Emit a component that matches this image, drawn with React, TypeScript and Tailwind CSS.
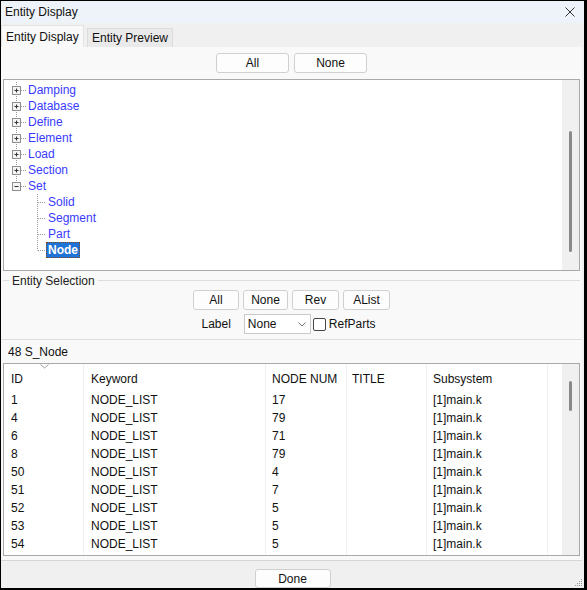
import React from "react";

const font = { fontFamily: '"Liberation Sans", Arial, sans-serif' };

type TreeItem = { label: string; level: 0 | 1; expander?: "plus" | "minus"; last?: boolean; selected?: boolean };

const TREE: TreeItem[] = [
  { label: "Damping", level: 0, expander: "plus" },
  { label: "Database", level: 0, expander: "plus" },
  { label: "Define", level: 0, expander: "plus" },
  { label: "Element", level: 0, expander: "plus" },
  { label: "Load", level: 0, expander: "plus" },
  { label: "Section", level: 0, expander: "plus" },
  { label: "Set", level: 0, expander: "minus", last: true },
  { label: "Solid", level: 1 },
  { label: "Segment", level: 1 },
  { label: "Part", level: 1 },
  { label: "Node", level: 1, last: true, selected: true },
];

const ROWS = [
  ["1", "17"],
  ["4", "79"],
  ["6", "71"],
  ["8", "79"],
  ["50", "4"],
  ["51", "7"],
  ["52", "5"],
  ["53", "5"],
  ["54", "5"],
];

const COLS = [
  { name: "ID", w: "w-[80px]", pl: "pl-[7px]" },
  { name: "Keyword", w: "w-[182px]", pl: "pl-[7px]" },
  { name: "NODE NUM", w: "w-[81px]", pl: "pl-[6px]" },
  { name: "TITLE", w: "w-[80px]", pl: "pl-[5px]" },
  { name: "Subsystem", w: "w-[121px]", pl: "pl-[6px]" },
];

function Btn({ label, w }: { label: string; w: string }) {
  return (
    <div
      className={`${w} h-[20px] flex items-center justify-center rounded-[3px] border border-[#d0d0d0] bg-[#fdfdfd] text-[12px] text-[#111]`}
    >
      {label}
    </div>
  );
}

// dotted tree guide lines + expander box for one row
function Gutter({ item, index }: { item: TreeItem; index: number }) {
  const dot = "#9a9a9a";
  return (
    <svg width="44" height="16" className="shrink-0">
      {item.level === 0 ? (
        <line
          x1="12.5"
          y1={index === 0 ? -2 : 0}
          x2="12.5"
          y2={item.last ? 8 : 16}
          stroke={dot}
          strokeDasharray="1 1"
        />
      ) : (
        <>
          <line x1="33.5" y1="0" x2="33.5" y2={item.last ? 8.5 : 16} stroke={dot} strokeDasharray="1 1" />
          <line x1="34" y1="8.5" x2="42" y2="8.5" stroke={dot} strokeDasharray="1 1" />
        </>
      )}
      {item.level === 0 && (
        <>
          <line x1="17" y1="8.5" x2="23" y2="8.5" stroke={dot} strokeDasharray="1 1" />
          <rect x="8.5" y="4.5" width="8" height="8" fill="#f4f4f4" stroke="#8f8f8f" />
          <line x1="10.5" y1="8.5" x2="14.5" y2="8.5" stroke="#333" />
          {item.expander === "plus" && <line x1="12.5" y1="6.5" x2="12.5" y2="10.5" stroke="#333" />}
        </>
      )}
    </svg>
  );
}

function Tree() {
  return (
    <div className="mx-[2px] mt-[6px] h-[192px] flex border border-[#a9a9a9] bg-white">
      <div className="flex-1 pt-[2px]">
        {TREE.map((item, i) => (
          <div key={item.label} className="flex h-[16px] items-center">
            {item.level === 0 ? (
              <>
                <div className="w-[24px] shrink-0 overflow-hidden">
                  <Gutter item={item} index={i} />
                </div>
                <span className="text-[12px] text-[#3a3aff] leading-[16px]">{item.label}</span>
              </>
            ) : (
              <>
                <div className="w-[42px] shrink-0 overflow-hidden">
                  <Gutter item={item} index={i} />
                </div>
                {item.selected ? (
                  <span className="h-[16px] px-[1px] flex items-center bg-[#1f72d6] text-white font-bold text-[12px] border border-dotted border-[#7a4a20]">
                    {item.label}
                  </span>
                ) : (
                  <span className="pl-[2px] text-[12px] text-[#3a3aff] leading-[16px]">{item.label}</span>
                )}
              </>
            )}
          </div>
        ))}
      </div>
      <div className="w-[17px] bg-[#f0f0f0] flex justify-center pt-[51px]">
        <div className="w-[3px] h-[121px] rounded-full bg-[#8a8a8a]" />
      </div>
    </div>
  );
}

function Table() {
  return (
    <div className="mx-[2px] h-[193px] flex border border-[#a9a9a9] bg-white overflow-hidden">
      <div className="flex-1 flex">
        {COLS.map((c, ci) => (
          <div key={c.name} className={`${c.w} shrink-0 border-r border-[#eef0f4] flex flex-col`}>
            <div className={`relative h-[27px] pt-[2px] flex items-center ${c.pl} text-[12px] text-[#111]`}>
              {ci === 0 && (
                <svg width="9" height="5" className="absolute left-[36px] top-[0px]">
                  <path d="M0.5 0.5 L4.5 4 L8.5 0.5" fill="none" stroke="#a0a0a0" />
                </svg>
              )}
              {c.name}
            </div>
            {ROWS.map((r, ri) => (
              <div key={ri} className={`h-[18px] flex items-center ${c.pl} text-[12px] text-[#111]`}>
                {ci === 0 ? r[0] : ci === 1 ? "NODE_LIST" : ci === 2 ? r[1] : ci === 4 ? "[1]main.k" : ""}
              </div>
            ))}
          </div>
        ))}
        <div className="flex-1" />
      </div>
      <div className="w-[17px] bg-[#f0f0f0] flex justify-center pt-[17px]">
        <div className="w-[3px] h-[30px] rounded-full bg-[#8a8a8a]" />
      </div>
    </div>
  );
}

export default function App() {
  return (
    <div
      style={font}
      className="w-[587px] h-[590px] flex flex-col border-black border-l border-t border-r-[3px] border-b-2 bg-[#f0f0f0] text-[12px] text-[#111]"
    >
      {/* title bar */}
      <div className="h-[22px] shrink-0 flex items-center justify-between pl-[4px] pr-[9px] bg-[#eef3f9]">
        <span className="text-[12px] text-[#111]">Entity Display</span>
        <svg width="10" height="10" viewBox="0 0 10 10">
          <path d="M0.5 0.5 L9.5 9.5 M9.5 0.5 L0.5 9.5" stroke="#333" strokeWidth="1" />
        </svg>
      </div>

      {/* tabs */}
      <div className="h-[24px] shrink-0 flex items-end gap-[3px]">
        <div className="h-[22px] w-[83px] flex items-center pl-[4px] bg-[#f9f9f9] border-t border-x border-[#e3e3e3]">
          Entity Display
        </div>
        <div className="h-[19px] w-[86px] flex items-center pl-[4px] bg-[#eaeaea] border-t border-x border-[#dcdcdc]">
          Entity Preview
        </div>
      </div>

      {/* page */}
      <div className="h-[514px] shrink-0 mr-[2px] flex flex-col bg-[#f9f9f9] border-b border-[#d6d6d6]">
        <div className="pt-[6px] flex justify-center gap-[5px]">
          <Btn label="All" w="w-[73px]" />
          <Btn label="None" w="w-[73px]" />
        </div>

        <Tree />

        {/* Entity Selection group */}
        <div className="relative mt-[9px] mx-[2px] border-t border-[#dedede]">
          <span className="absolute -top-[9px] left-[6px] px-[3px] bg-[#f9f9f9] text-[12px] text-[#222]">
            Entity Selection
          </span>
          <div className="mt-[9px] flex justify-center gap-[4px]">
            <Btn label="All" w="w-[46px]" />
            <Btn label="None" w="w-[45px]" />
            <Btn label="Rev" w="w-[47px]" />
            <Btn label="AList" w="w-[47px]" />
          </div>
          <div className="mt-[4px] h-[20px] flex items-center justify-center -ml-[6px]">
            <span className="mr-[13px]">Label</span>
            <div className="w-[67px] h-[20px] flex items-center justify-between pl-[3px] pr-[4px] bg-white border border-[#cacaca]">
              <span>None</span>
              <svg width="8" height="5">
                <path d="M0.5 0.5 L4 4 L7.5 0.5" fill="none" stroke="#777" />
              </svg>
            </div>
            <div className="ml-[2px] w-[13px] h-[13px] rounded-[2px] border border-[#444] bg-white" />
            <span className="ml-[3px]">RefParts</span>
          </div>
        </div>

        <div className="mt-[5px] border-b border-[#dedede]" />

        <div className="h-[23px] flex items-center pl-[7px]">48 S_Node</div>

        <Table />
      </div>

      {/* bottom bar */}
      <div className="relative flex-1 flex items-end justify-center">
        <div className="w-[76px] h-[19px] flex items-center justify-center rounded-[3px] border border-[#d0d0d0] bg-[#fdfdfd]">
          Done
        </div>
        <svg width="8" height="8" className="absolute right-[1px] bottom-[1px]">
          <rect x="6" y="0" width="1" height="1" fill="#999" />
          <rect x="4" y="2" width="1" height="1" fill="#999" />
          <rect x="6" y="2" width="1" height="1" fill="#999" />
          <rect x="2" y="4" width="1" height="1" fill="#999" />
          <rect x="4" y="4" width="1" height="1" fill="#999" />
          <rect x="6" y="4" width="1" height="1" fill="#999" />
          <rect x="0" y="6" width="1" height="1" fill="#999" />
          <rect x="2" y="6" width="1" height="1" fill="#999" />
          <rect x="4" y="6" width="1" height="1" fill="#999" />
          <rect x="6" y="6" width="1" height="1" fill="#999" />
        </svg>
      </div>
    </div>
  );
}
